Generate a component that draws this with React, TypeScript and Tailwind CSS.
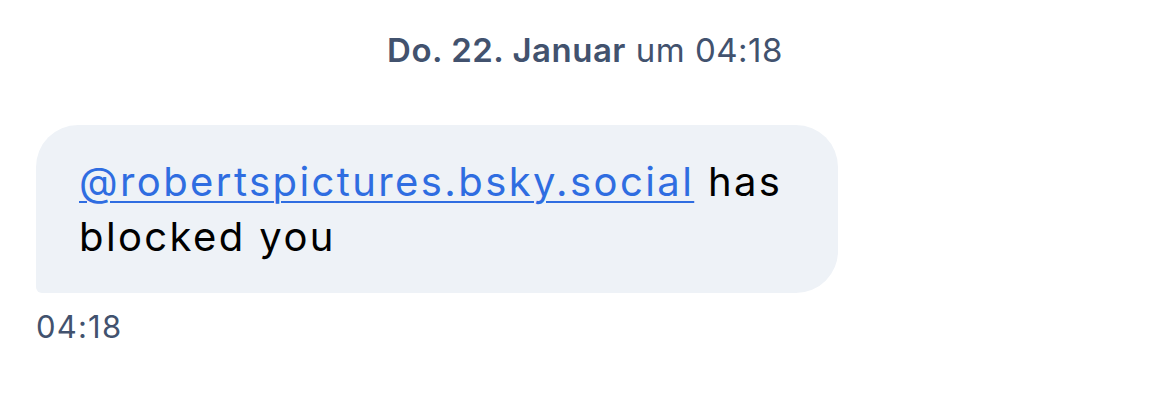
export default function App() {
  return (
    <div className="min-h-screen bg-white font-['Inter','Noto_Sans',sans-serif]">
      {/* Date header */}
      <div className="flex justify-center pt-[31px]">
        <p className="text-[33px] leading-[38px] text-[#42526e] tracking-[0.5px]">
          <span className="font-semibold">Do. 22. Januar</span> um 04:18
        </p>
      </div>

      {/* Message bubble */}
      <div className="pl-[36px] pt-[56px]">
        <div className="w-[802px] rounded-[42px] rounded-bl-[6px] bg-[#eef2f7] pl-[43px] pr-[40px] pt-[29px] pb-[29px]">
          <p className="text-[40px] leading-[55px] tracking-[2.4px] text-black">
            <a href="#" className="text-[#2f6de1] underline decoration-[2px] underline-offset-[5px]">
              @robertspictures.bsky.social
            </a>{" "}
            has blocked you
          </p>
        </div>
        <p className="mt-[17px] text-[31px] leading-[34px] tracking-[1.2px] text-[#42526e]">04:18</p>
      </div>
    </div>
  )
}
